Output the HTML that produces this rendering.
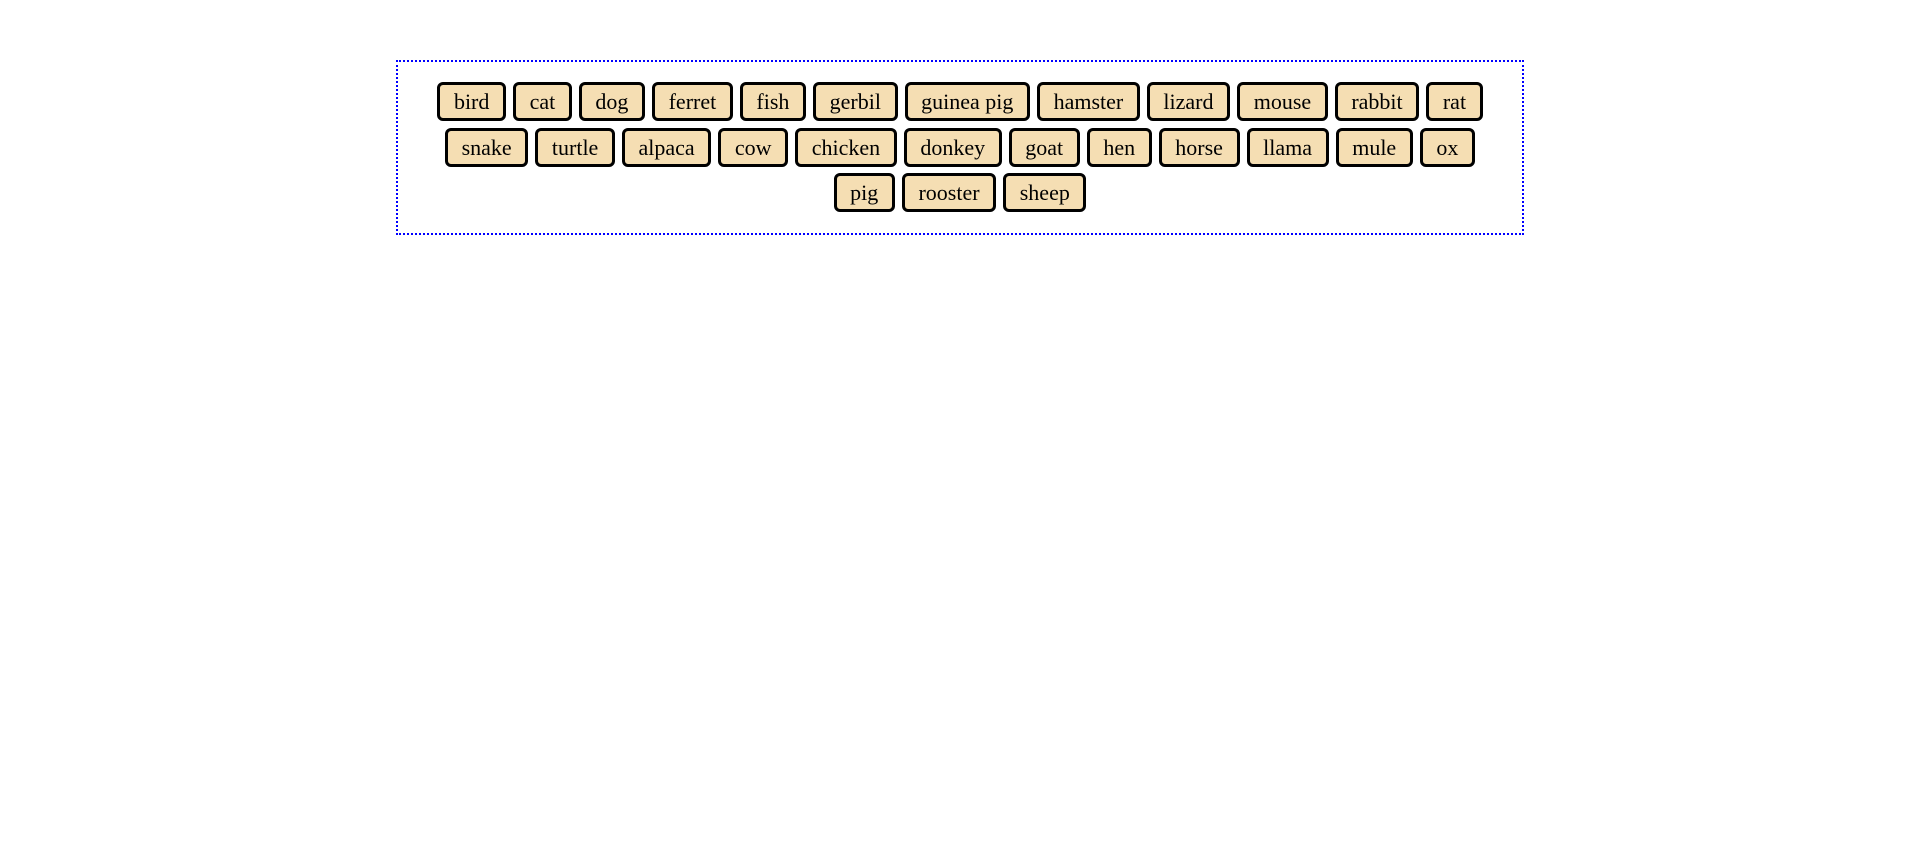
<!DOCTYPE html>
<html><head><style>
html,body{margin:0;background:#fff;}
#box{position:absolute;left:396px;top:60px;width:1084px;height:131px;padding:20px;border:2px dotted blue;display:flex;flex-wrap:wrap;justify-content:center;align-content:flex-start;gap:6.5px 7px;}
.b{box-sizing:border-box;height:39px;border:3px solid #000;border-radius:6px;background:#f5deb3;font-family:"Liberation Serif",serif;font-size:22px;line-height:33px;padding:0 13.6px;color:#000;}
</style></head><body>
<div id="box">
<span class="b">bird</span><span class="b">cat</span><span class="b">dog</span><span class="b">ferret</span><span class="b">fish</span><span class="b">gerbil</span><span class="b">guinea pig</span><span class="b">hamster</span><span class="b">lizard</span><span class="b">mouse</span><span class="b">rabbit</span><span class="b">rat</span><span class="b">snake</span><span class="b">turtle</span><span class="b">alpaca</span><span class="b">cow</span><span class="b">chicken</span><span class="b">donkey</span><span class="b">goat</span><span class="b">hen</span><span class="b">horse</span><span class="b">llama</span><span class="b">mule</span><span class="b">ox</span><span class="b">pig</span><span class="b">rooster</span><span class="b">sheep</span>
</div>
</body></html>
